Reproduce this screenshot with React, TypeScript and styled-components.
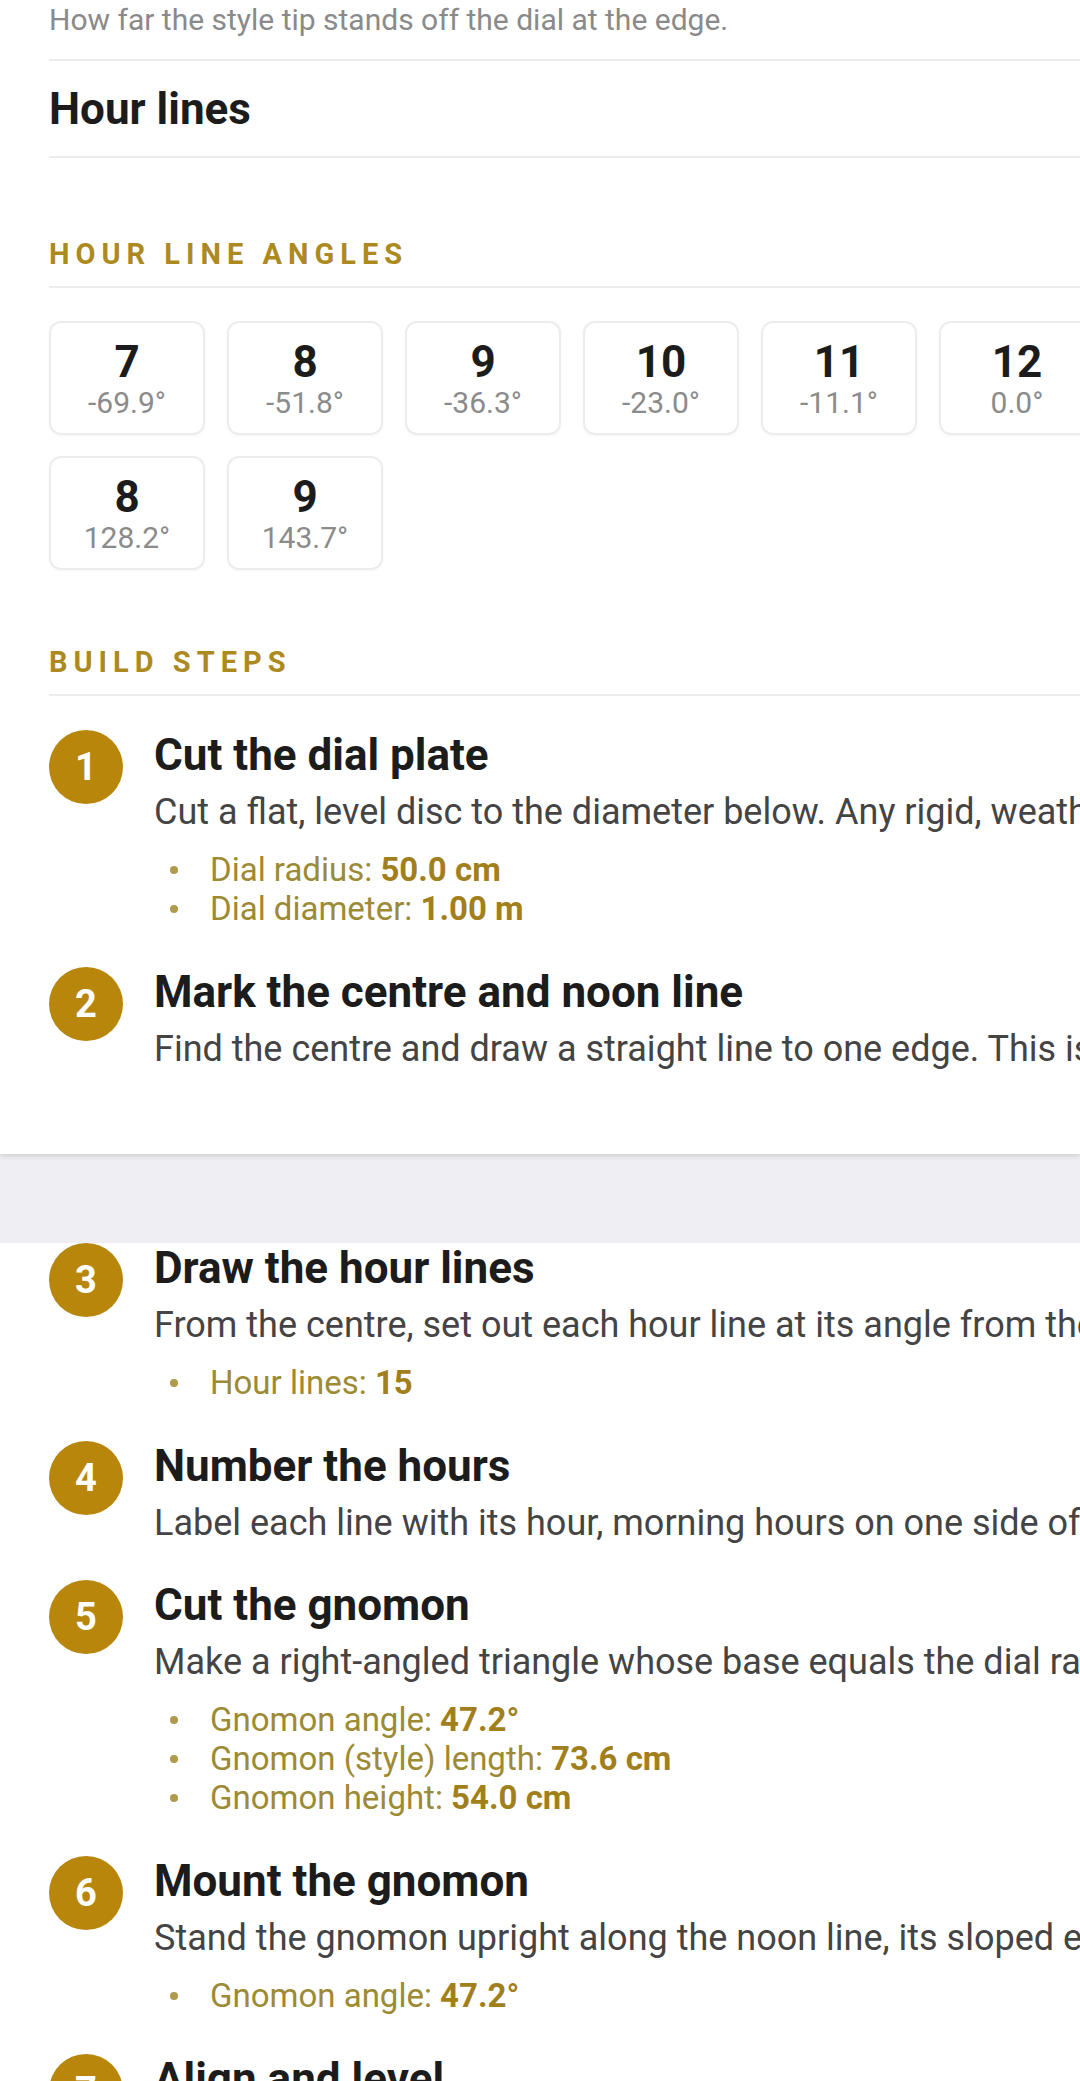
import React from 'react';
import styled, { createGlobalStyle } from 'styled-components';

const GlobalStyle = createGlobalStyle`
  html, body {
    margin: 0;
    padding: 0;
    background: #eeeef3;
    overflow-x: hidden;
  }
  body {
    font-family: Roboto, "Noto Sans", "Liberation Sans", sans-serif;
    color: #1c1c1c;
  }
`;

const gold = '#b8860b';

type HourAngle = { hour: string; angle: string };

type Step = {
  title: string;
  text: string;
  facts?: { label: string; value: string }[];
};

const hourAngles: HourAngle[] = [
  { hour: '7', angle: '-69.9°' },
  { hour: '8', angle: '-51.8°' },
  { hour: '9', angle: '-36.3°' },
  { hour: '10', angle: '-23.0°' },
  { hour: '11', angle: '-11.1°' },
  { hour: '12', angle: '0.0°' },
  { hour: '1', angle: '11.1°' },
  { hour: '2', angle: '23.0°' },
  { hour: '3', angle: '36.3°' },
  { hour: '4', angle: '51.8°' },
  { hour: '5', angle: '69.9°' },
  { hour: '6', angle: '90.0°' },
  { hour: '7', angle: '110.1°' },
  { hour: '8', angle: '128.2°' },
  { hour: '9', angle: '143.7°' },
];

const firstSteps: Step[] = [
  {
    title: 'Cut the dial plate',
    text: 'Cut a flat, level disc to the diameter below. Any rigid, weatherproof material will do: slate, stone, hardwood or sheet metal.',
    facts: [
      { label: 'Dial radius', value: '50.0 cm' },
      { label: 'Dial diameter', value: '1.00 m' },
    ],
  },
  {
    title: 'Mark the centre and noon line',
    text: 'Find the centre and draw a straight line to one edge. This is the 12 o\u2019clock line and must point to true north once the dial is set.',
  },
];

const laterSteps: Step[] = [
  {
    title: 'Draw the hour lines',
    text: 'From the centre, set out each hour line at its angle from the noon line, using the table of hour line angles above.',
    facts: [{ label: 'Hour lines', value: '15' }],
  },
  {
    title: 'Number the hours',
    text: 'Label each line with its hour, morning hours on one side of the noon line and afternoon hours on the other.',
  },
  {
    title: 'Cut the gnomon',
    text: 'Make a right-angled triangle whose base equals the dial radius and whose sloped edge rises at the gnomon angle.',
    facts: [
      { label: 'Gnomon angle', value: '47.2°' },
      { label: 'Gnomon (style) length', value: '73.6 cm' },
      { label: 'Gnomon height', value: '54.0 cm' },
    ],
  },
  {
    title: 'Mount the gnomon',
    text: 'Stand the gnomon upright along the noon line, its sloped edge rising from the centre towards the north edge of the dial.',
    facts: [{ label: 'Gnomon angle', value: '47.2°' }],
  },
  {
    title: 'Align and level',
    text: 'Set the dial on a level base and turn it until the noon line points to true north, then fix it in place.',
  },
];

const Sheet = styled.div<{ $raised?: boolean; $padTop?: number; $padBottom?: number }>`
  background: #ffffff;
  padding: ${p => p.$padTop ?? 0}px 0 ${p => p.$padBottom ?? 0}px 49px;
  box-shadow: ${p => (p.$raised ? '0 2px 5px rgba(0, 0, 0, 0.14)' : 'none')};
  position: relative;
`;

const Content = styled.div`
  width: 2300px;
`;

const PageBreak = styled.div`
  height: 89px;
  background: #eeeef3;
`;

const SettingHint = styled.div`
  font-size: 30px;
  line-height: 40px;
  color: #8a8a8a;
  padding-bottom: 19px;
  border-bottom: 2px solid #ececec;
`;

const SettingGroup = styled.div`
  font-size: 44px;
  line-height: 52px;
  font-weight: 700;
  color: #1c1c1c;
  padding: 22px 0 21px;
  border-bottom: 2px solid #ececec;
`;

const SectionLabel = styled.h3<{ $gap: number }>`
  margin: ${p => p.$gap}px 0 0;
  font-size: 29px;
  line-height: 34px;
  font-weight: 700;
  letter-spacing: 6px;
  text-transform: uppercase;
  color: #ad8a1f;
  padding-bottom: 15px;
  border-bottom: 2px solid #ececec;
`;

const AngleGrid = styled.div`
  display: flex;
  flex-wrap: wrap;
  gap: 21px 22px;
  margin-top: 33px;
`;

const AngleCard = styled.div`
  box-sizing: border-box;
  width: 156px;
  height: 114px;
  border: 2px solid #ececec;
  border-radius: 12px;
  box-shadow: 0 1px 3px rgba(0, 0, 0, 0.04);
  padding-top: 15px;
  display: flex;
  flex-direction: column;
  align-items: center;
`;

const AngleHour = styled.div`
  font-size: 44px;
  line-height: 48px;
  font-weight: 700;
  color: #1c1c1c;
`;

const AngleValue = styled.div`
  font-size: 30px;
  line-height: 36px;
  margin-top: -1px;
  color: #8b8b8b;
`;

const StepList = styled.ol<{ $top?: number }>`
  list-style: none;
  margin: ${p => p.$top ?? 0}px 0 0;
  padding: 0;
  display: flex;
  flex-direction: column;
  gap: 35px;
`;

const StepRow = styled.li`
  display: flex;
  align-items: flex-start;
  gap: 31px;
`;

const StepBadge = styled.div`
  flex: none;
  width: 74px;
  height: 74px;
  border-radius: 50%;
  background: ${gold};
  color: #ffffff;
  font-size: 38px;
  font-weight: 700;
  display: flex;
  align-items: center;
  justify-content: center;
`;

const StepBody = styled.div`
  min-width: 0;
`;

const StepTitle = styled.div`
  font-size: 44px;
  line-height: 50px;
  font-weight: 700;
  color: #1c1c1c;
  white-space: nowrap;
`;

const StepText = styled.div`
  margin-top: 10px;
  font-size: 36px;
  line-height: 44px;
  color: #444444;
  white-space: nowrap;
`;

const FactList = styled.ul`
  list-style: none;
  margin: 16px 0 4px;
  padding: 0;
`;

const Fact = styled.li`
  display: flex;
  align-items: center;
  padding-left: 16px;
  font-size: 33px;
  line-height: 39px;
  color: #9d8a35;
`;

const FactDot = styled.span`
  flex: none;
  width: 8px;
  height: 8px;
  border-radius: 50%;
  background: #b09a4e;
  margin-right: 32px;
`;

const FactValue = styled.b`
  font-weight: 700;
  color: #a27f1d;
`;

function Steps({ steps, start, top }: { steps: Step[]; start: number; top?: number }) {
  return (
    <StepList $top={top}>
      {steps.map((step, i) => (
        <StepRow key={step.title}>
          <StepBadge>{start + i}</StepBadge>
          <StepBody>
            <StepTitle>{step.title}</StepTitle>
            <StepText>{step.text}</StepText>
            {step.facts && (
              <FactList>
                {step.facts.map(f => (
                  <Fact key={f.label}>
                    <FactDot />
                    <span>
                      {f.label}: <FactValue>{f.value}</FactValue>
                    </span>
                  </Fact>
                ))}
              </FactList>
            )}
          </StepBody>
        </StepRow>
      ))}
    </StepList>
  );
}

export default function App() {
  return (
    <>
      <GlobalStyle />
      <Sheet $raised $padBottom={83}>
        <Content>
          <SettingHint>How far the style tip stands off the dial at the edge.</SettingHint>
          <SettingGroup>Hour lines</SettingGroup>

          <SectionLabel $gap={79}>Hour line angles</SectionLabel>
          <AngleGrid>
            {hourAngles.map((h, i) => (
              <AngleCard key={i}>
                <AngleHour>{h.hour}</AngleHour>
                <AngleValue>{h.angle}</AngleValue>
              </AngleCard>
            ))}
          </AngleGrid>

          <SectionLabel $gap={75}>Build steps</SectionLabel>
          <Steps steps={firstSteps} start={1} top={34} />
        </Content>
      </Sheet>
      <PageBreak />
      <Sheet $padTop={0} $padBottom={80}>
        <Content>
          <Steps steps={laterSteps} start={3} />
        </Content>
      </Sheet>
    </>
  );
}
